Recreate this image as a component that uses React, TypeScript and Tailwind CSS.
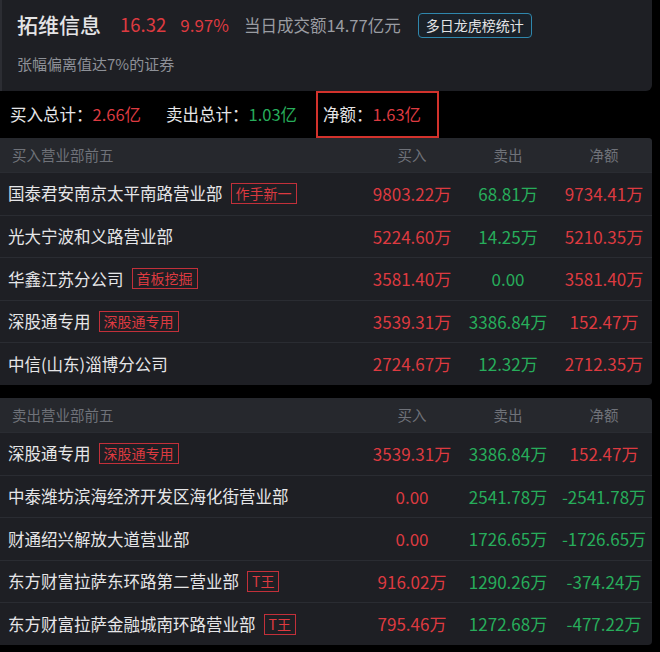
import React from 'react';

type Row = { name: string; tag?: string; buy: string; sell: string; net: string; netRed: boolean };

const buyTop: Row[] = [
  { name: '国泰君安南京太平南路营业部', tag: '作手新一', buy: '9803.22万', sell: '68.81万', net: '9734.41万', netRed: true },
  { name: '光大宁波和义路营业部', buy: '5224.60万', sell: '14.25万', net: '5210.35万', netRed: true },
  { name: '华鑫江苏分公司', tag: '首板挖掘', buy: '3581.40万', sell: '0.00', net: '3581.40万', netRed: true },
  { name: '深股通专用', tag: '深股通专用', buy: '3539.31万', sell: '3386.84万', net: '152.47万', netRed: true },
  { name: '中信(山东)淄博分公司', buy: '2724.67万', sell: '12.32万', net: '2712.35万', netRed: true },
];

const sellTop: Row[] = [
  { name: '深股通专用', tag: '深股通专用', buy: '3539.31万', sell: '3386.84万', net: '152.47万', netRed: true },
  { name: '中泰潍坊滨海经济开发区海化街营业部', buy: '0.00', sell: '2541.78万', net: '-2541.78万', netRed: false },
  { name: '财通绍兴解放大道营业部', buy: '0.00', sell: '1726.65万', net: '-1726.65万', netRed: false },
  { name: '东方财富拉萨东环路第二营业部', tag: 'T王', buy: '916.02万', sell: '1290.26万', net: '-374.24万', netRed: false },
  { name: '东方财富拉萨金融城南环路营业部', tag: 'T王', buy: '795.46万', sell: '1272.68万', net: '-477.22万', netRed: false },
];

const RED = 'text-[#dd3a40]';
const GREEN = 'text-[#27ad5b]';

function Table({ title, rows }: { title: string; rows: Row[] }) {
  return (
    <div className="w-[652px] bg-[#1e1f24] rounded-r-sm overflow-hidden">
      <div className="flex h-[34px] items-center bg-[#26282d] text-[14.5px] text-[#6f7279]">
        <div className="flex-1 pl-[12px]">{title}</div>
        <div className="w-[96px] text-center">买入</div>
        <div className="w-[96px] text-center">卖出</div>
        <div className="w-[96px] text-center">净额</div>
      </div>
      {rows.map((r, i) => (
        <div key={i} className="flex h-[42.6px] items-center border-t border-[#2a2c32] text-[17px]">
          <div className="flex-1 flex items-center pl-[8px] text-[16.5px] text-[#e6e6e8]">
            <span>{r.name}</span>
            {r.tag && (
              <span className="ml-[8px] border border-[#c2303a] px-[4px] text-[14px] leading-[19px] text-[#dd3a40]">
                {r.tag}
              </span>
            )}
          </div>
          <div className={`w-[96px] text-center ${RED}`}>{r.buy}</div>
          <div className={`w-[96px] text-center ${GREEN}`}>{r.sell}</div>
          <div className={`w-[96px] text-center ${r.netRed ? RED : GREEN}`}>{r.net}</div>
        </div>
      ))}
    </div>
  );
}

export default function App() {
  return (
    <div className="w-[660px] h-[652px] bg-black overflow-hidden font-['Noto_Sans_CJK_SC','Noto_Sans',sans-serif]">
      {/* stock header */}
      <div className="w-[652px] h-[91px] bg-[#1e1f24] rounded-br-md pl-[15px] border-l-2 border-[#2c2d33]">
        <div className="flex items-center h-[50px]">
          <span className="text-[21px] font-medium text-[#e4e4e6]">拓维信息</span>
          <span className={`ml-[19px] text-[18.5px] ${RED}`}>16.32</span>
          <span className={`ml-[14px] text-[17px] ${RED}`}>9.97%</span>
          <span className="ml-[15px] text-[16.5px] text-[#9a9ca2]">当日成交额14.77亿元</span>
          <span className="ml-[17px] h-[25px] flex items-center rounded-[4px] border border-[#2f87ad] bg-[#1a2129] px-[7px] text-[14px] text-[#e4e4e6]">
            多日龙虎榜统计
          </span>
        </div>
        <div className="text-[15px] text-[#8d9097] mt-[3px]">张幅偏离值达7%的证券</div>
      </div>

      {/* totals */}
      <div className="flex h-[47px] items-stretch text-[16.5px] text-[#e6e6e8]">
        <div className="flex items-center w-[166px] pl-[10px]">
          <span>买入总计：</span>
          <span className={RED}>2.66亿</span>
        </div>
        <div className="flex items-center w-[150px]">
          <span>卖出总计：</span>
          <span className={GREEN}>1.03亿</span>
        </div>
        <div className="flex items-center w-[123px] border-2 border-[#d2322c] pl-[5px]">
          <span>净额：</span>
          <span className={RED}>1.63亿</span>
        </div>
      </div>

      <Table title="买入营业部前五" rows={buyTop} />
      <div className="h-[13px]" />
      <Table title="卖出营业部前五" rows={sellTop} />
    </div>
  );
}
